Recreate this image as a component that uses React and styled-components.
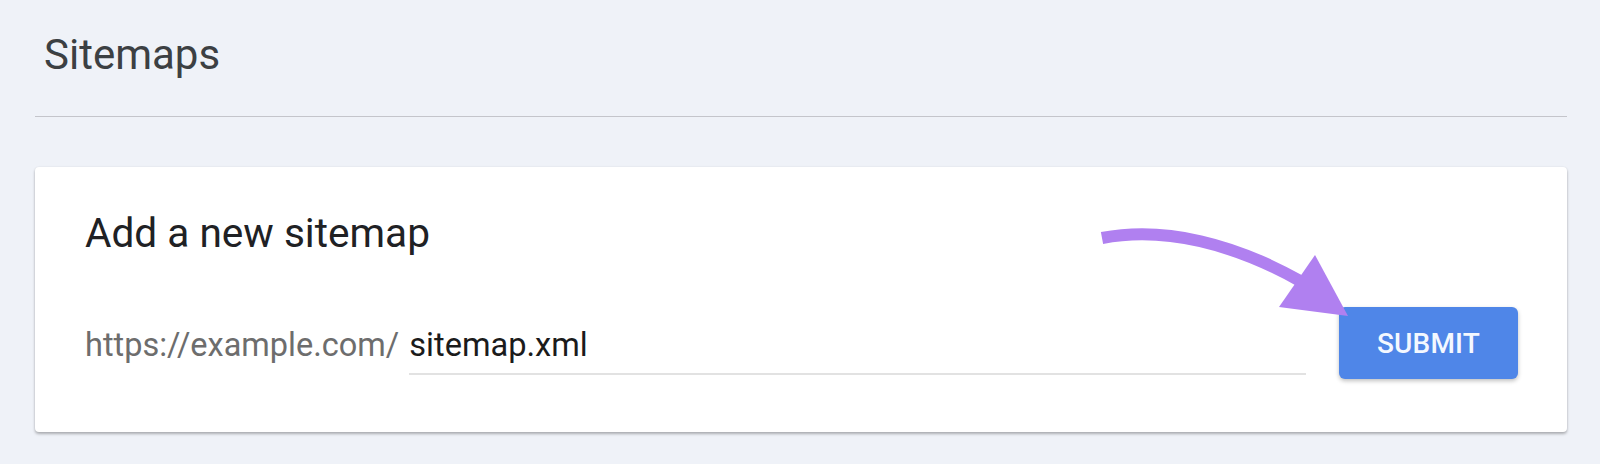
import React from "react";
import styled, { createGlobalStyle } from "styled-components";

const GlobalStyle = createGlobalStyle`
  html, body {
    margin: 0;
    padding: 0;
    background: #eff2f8;
  }
  body {
    font-family: Roboto, "Liberation Sans", sans-serif;
  }
`;

const Page = styled.div`
  padding: 0 33px 0 35px;
  min-height: 464px;
  box-sizing: border-box;
`;

const Header = styled.header`
  padding: 30px 0 0 9px;
  height: 116px;
  box-sizing: border-box;
`;

const Title = styled.h1`
  margin: 0;
  font-family: Roboto, "Liberation Sans", sans-serif;
  font-weight: 400;
  font-size: 42px;
  line-height: 50px;
  color: #3c4043;
`;

const Divider = styled.hr`
  margin: 0;
  border: none;
  height: 1px;
  background: #c4c5cb;
`;

const Card = styled.section`
  position: relative;
  margin-top: 50px;
  background: #ffffff;
  border-radius: 4px;
  box-shadow: 0 2px 3px rgba(0, 0, 0, 0.28), 0 0 2px rgba(0, 0, 0, 0.08);
  padding: 42px 49px 53px 50px;
  height: 265px;
  box-sizing: border-box;
`;

const CardTitle = styled.h2`
  margin: 0;
  font-weight: 400;
  font-size: 40.6px;
  line-height: 48px;
  color: #202124;
`;

const Row = styled.div`
  display: flex;
  align-items: flex-start;
  margin-top: 50px;
`;

const Field = styled.label`
  flex: 1;
  display: flex;
  align-items: baseline;
  gap: 10px;
  margin-top: 16px;
`;

const Prefix = styled.span`
  font-size: 32.5px;
  line-height: 40px;
  color: #6d6d6d;
  white-space: nowrap;
`;

const Input = styled.input`
  flex: 1;
  min-width: 0;
  height: 44px;
  padding: 0 0 6px;
  border: none;
  border-bottom: 2px solid #e2e2e2;
  outline: none;
  background: transparent;
  font-family: Roboto, "Liberation Sans", sans-serif;
  font-size: 32.6px;
  color: #1b1b1b;
`;

const SubmitButton = styled.button`
  flex: none;
  margin-left: 33px;
  width: 179px;
  height: 72px;
  border: none;
  border-radius: 6px;
  background: #4f86e8;
  color: #f4f8ff;
  font-family: Roboto, "Liberation Sans", sans-serif;
  font-weight: 500;
  font-size: 28px;
  letter-spacing: 0.2px;
  box-shadow: 0 2px 4px rgba(0, 0, 0, 0.25);
  cursor: pointer;
`;

const Arrow = styled.svg`
  position: absolute;
  left: 1060px;
  top: 55px;
  width: 270px;
  height: 110px;
  overflow: visible;
  pointer-events: none;
  z-index: 2;
`;

export default function App() {
  return (
    <>
      <GlobalStyle />
      <Page>
        <Header>
          <Title>Sitemaps</Title>
        </Header>
        <Divider />
        <Card>
          <CardTitle>Add a new sitemap</CardTitle>
          <Row>
            <Field>
              <Prefix>https://example.com/</Prefix>
              <Input defaultValue="sitemap.xml" />
            </Field>
            <SubmitButton>SUBMIT</SubmitButton>
          </Row>
          <Arrow viewBox="0 0 270 110" aria-hidden="true">
            <path
              d="M7 16 C70 4 140 22 207 60"
              fill="none"
              stroke="#b080f0"
              strokeWidth="12"
              strokeLinecap="butt"
            />
            <polygon points="220,33 184,85 253,94" fill="#b080f0" />
          </Arrow>
        </Card>
      </Page>
    </>
  );
}
